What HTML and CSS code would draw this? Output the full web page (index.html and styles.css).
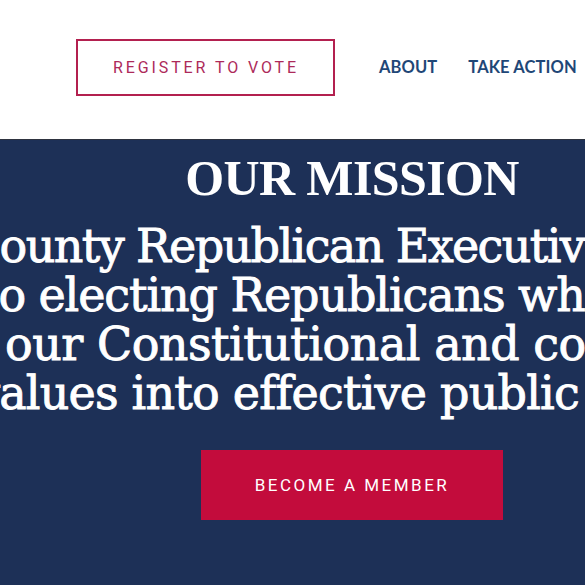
FILE: index.html
```html
<!DOCTYPE html>
<html lang="en">
<head>
<meta charset="utf-8">
<title>Our Mission</title>
<link rel="stylesheet" href="styles.css">
</head>
<body>
<header class="site-header">
  <a class="btn-outline" href="#">REGISTER TO VOTE</a>
  <nav class="nav">
    <a class="nav-link" href="#">ABOUT</a>
    <a class="nav-link" href="#">TAKE ACTION</a>
  </nav>
</header>
<main class="hero">
  <h1 class="hero-title">OUR MISSION</h1>
  <div class="mission">
    <p class="line l1">County Republican Executive Committee</p>
    <p class="line l2">to electing Republicans who will</p>
    <p class="line l3">our Constitutional and conservative</p>
    <p class="line l4">values into effective public policy.</p>
  </div>
  <a class="btn-solid" href="#">BECOME A MEMBER</a>
</main>
</body>
</html>
```
FILE: styles.css
```css
html, body {
  margin: 0;
  padding: 0;
}
body {
  width: 585px;
  height: 585px;
  overflow: hidden;
  background: #1d3057;
  font-family: "Roboto", "Liberation Sans", sans-serif;
}
a { text-decoration: none; }

.site-header {
  height: 139px;
  box-sizing: border-box;
  background: #ffffff;
  display: flex;
  align-items: flex-start;
  padding: 39px 0 0 76px;
}
.btn-outline {
  box-sizing: border-box;
  width: 259px;
  height: 57px;
  border: 2px solid #b3204f;
  color: #ad2a5a;
  font-size: 16px;
  letter-spacing: 2.9px;
  display: flex;
  align-items: center;
  justify-content: center;
  padding-left: 1px;
  flex-shrink: 0;
}
.nav {
  display: flex;
  gap: 31px;
  margin-left: 44px;
  height: 57px;
  align-items: center;
  flex-shrink: 0;
}
.nav-link {
  font-family: "Lato", "Open Sans", sans-serif;
  font-weight: 700;
  font-size: 16.5px;
  letter-spacing: 0.1px;
  color: #1f4777;
  white-space: nowrap;
  padding-bottom: 2px;
}

.hero {
  border-top: 1px solid #2e333f;
  display: flex;
  flex-direction: column;
  align-items: center;
  padding-left: 119px;
  color: #ffffff;
}
.hero-title {
  margin: 8px 0 0;
  font-family: "Liberation Serif", "Times New Roman", serif;
  font-weight: 700;
  font-size: 50px;
  line-height: 60px;
  letter-spacing: -0.6px;
}
.mission {
  align-self: stretch;
  margin-left: -119px;
  margin-top: 14px;
}
.line {
  margin: 0;
  white-space: nowrap;
  font-family: "DejaVu Serif", "Liberation Serif", serif;
  font-size: 46px;
  line-height: 49px;
  -webkit-text-stroke: 0.9px #ffffff;
}
.l1 { text-indent: -34px; letter-spacing: -1.6px; }
.l2 { text-indent: -19px; letter-spacing: -1.1px; }
.l3 { text-indent: 5px; letter-spacing: -0.5px; }
.l4 { text-indent: -26px; letter-spacing: -0.8px; }

.btn-solid {
  margin-top: 32px;
  width: 302px;
  height: 70px;
  background: #c30c3c;
  color: #ffffff;
  font-size: 17px;
  letter-spacing: 2.5px;
  display: flex;
  align-items: center;
  justify-content: center;
}
```
